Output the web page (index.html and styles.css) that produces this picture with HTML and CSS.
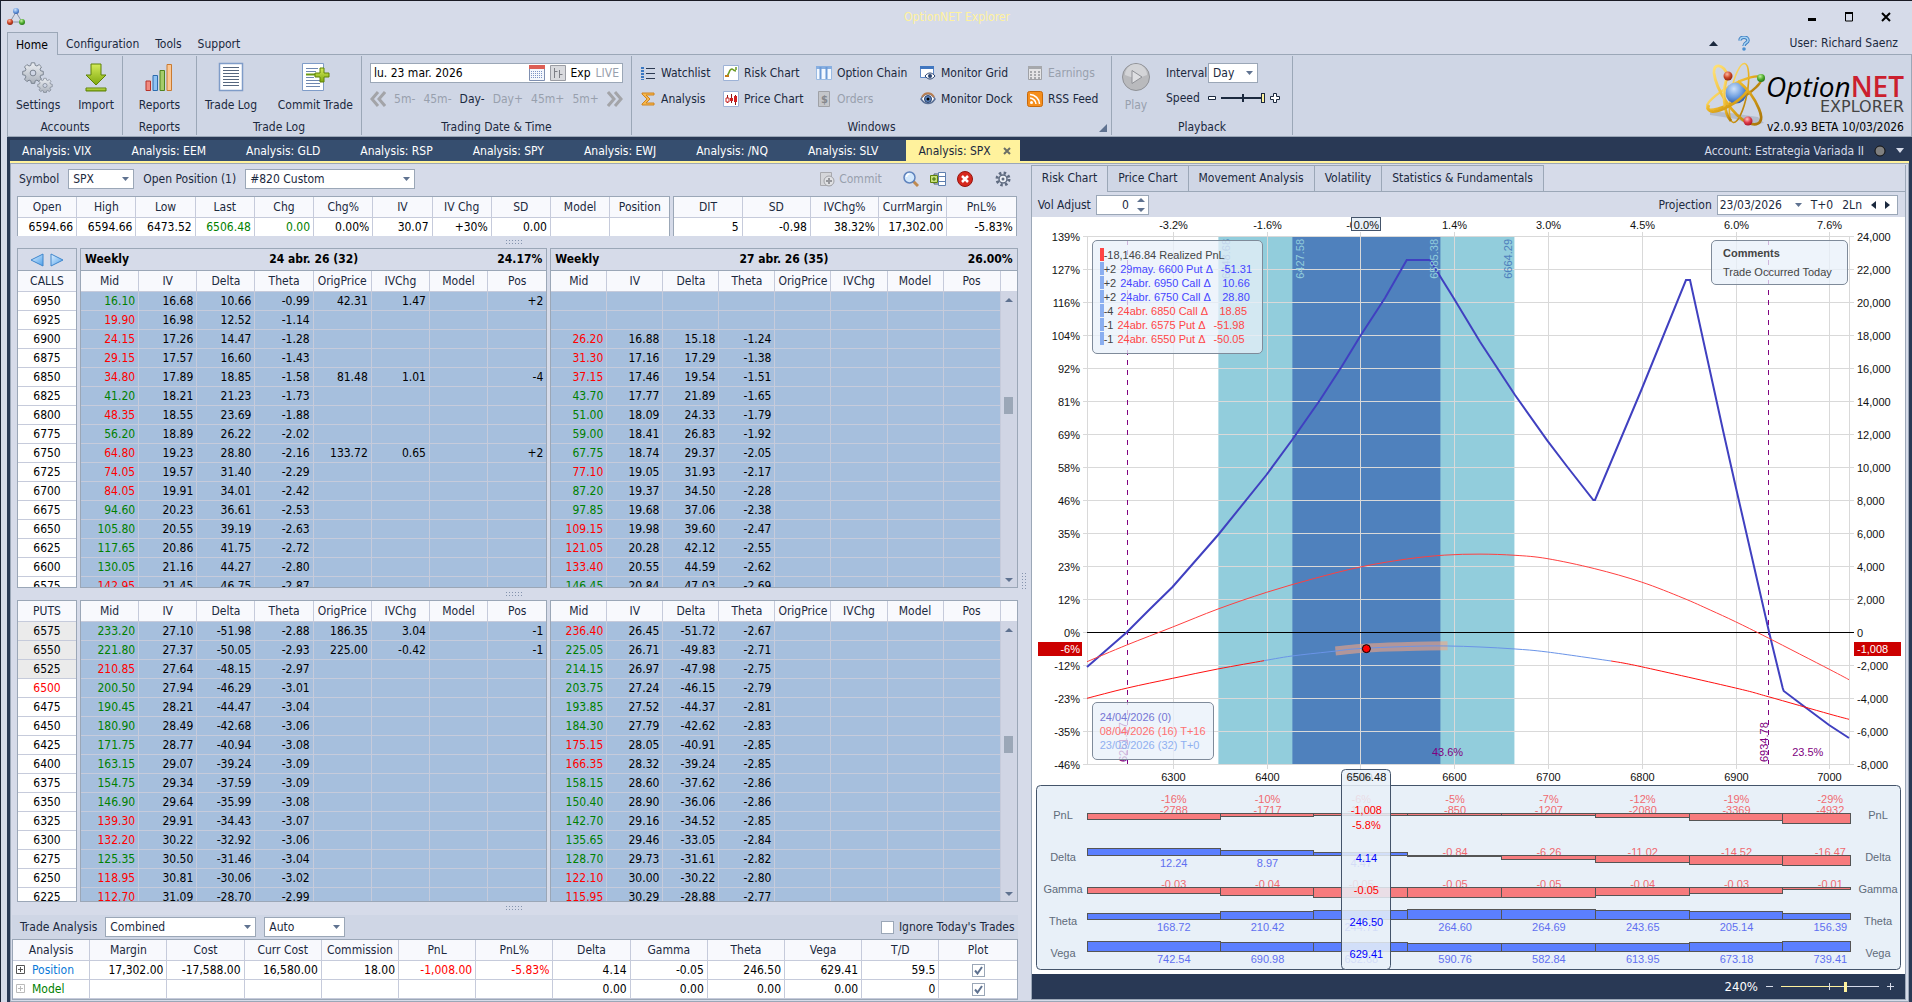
FILE: index.html
```html
<!DOCTYPE html>
<html lang="en">
<head>
    <meta charset="UTF-8">
    <meta name="viewport" content="width=device-width, initial-scale=1.0">
    <title>OptionNET Explorer</title>
    <link rel="stylesheet" href="styles.css">
</head>
<body>
    <svg class="defs" width="0" height="0" aria-hidden="true">
        <defs>
            <linearGradient id="gold" x1="0" y1="0" x2="1" y2="1"><stop offset="0" stop-color="#ffe27a"/><stop offset="0.5" stop-color="#e8b020"/><stop offset="1" stop-color="#a87408"/></linearGradient>
            <radialGradient id="ballBlue" cx="0.4" cy="0.3" r="0.8"><stop offset="0" stop-color="#cfe2fb"/><stop offset="0.5" stop-color="#6f9fe0"/><stop offset="1" stop-color="#1f4a9c"/></radialGradient>
            <radialGradient id="ballRed" cx="0.4" cy="0.3" r="0.8"><stop offset="0" stop-color="#ffb8a0"/><stop offset="0.5" stop-color="#cc4526"/><stop offset="1" stop-color="#7c1a0a"/></radialGradient>
            <radialGradient id="ballPink" cx="0.4" cy="0.3" r="0.8"><stop offset="0" stop-color="#ffc4c8"/><stop offset="0.5" stop-color="#dc3846"/><stop offset="1" stop-color="#9c0f20"/></radialGradient>
            <radialGradient id="ballGreen" cx="0.4" cy="0.3" r="0.8"><stop offset="0" stop-color="#c4f0a0"/><stop offset="0.5" stop-color="#4fae30"/><stop offset="1" stop-color="#1d6410"/></radialGradient>
            <linearGradient id="leaf" x1="0" y1="0" x2="0" y2="1"><stop offset="0" stop-color="#d5ec5a"/><stop offset="1" stop-color="#7fa80e"/></linearGradient>
            <linearGradient id="steel" x1="0" y1="0" x2="0" y2="1"><stop offset="0" stop-color="#eceff3"/><stop offset="1" stop-color="#a9b0ba"/></linearGradient>
            <linearGradient id="sky" x1="0" y1="0" x2="1" y2="1"><stop offset="0" stop-color="#e2f1ff"/><stop offset="1" stop-color="#4da0ea"/></linearGradient>
            <g id="gear">
                <g fill="url(#steel)" stroke="#6d7683">
                    <path d="M-2-10h4l.6 3 2 .8 2.6-1.7 2.8 2.8-1.7 2.6.8 2 3 .6v4l-3 .6-.8 2 1.7 2.6-2.8 2.8-2.6-1.7-2 .8-.6 3h-4l-.6-3-2-.8-2.6 1.7-2.8-2.8 1.7-2.6-.8-2-3-.6v-4l3-.6.8-2-1.7-2.6 2.8-2.8 2.6 1.7 2-.8z" transform="translate(0 -2)"/>
                    <circle r="3.4" fill="#cfd6e5"/>
                </g>
            </g>
        </defs>
    </svg>

    <header class="titlebar">
        <svg class="app-icon" width="18" height="18" viewBox="0 0 18 18">
            <path d="M9 4L3 14h12z" fill="none" stroke="#8a94a6"/>
            <circle cx="9" cy="3" r="3" fill="url(#ballBlue)"/><circle cx="3" cy="14" r="3" fill="url(#ballRed)"/><circle cx="15" cy="14" r="3" fill="url(#ballGreen)"/>
        </svg>
        <h1>OptionNET Explorer</h1>
        <div class="window-buttons">
            <button aria-label="Minimize"><svg width="10" height="10"><path d="M1 6h8v3H1z"/></svg></button>
            <button aria-label="Maximize"><svg width="10" height="10"><path d="M1.5 1h7v8h-7z" fill="none" stroke="#000"/><path d="M1 0h8v2H1z"/></svg></button>
            <button aria-label="Close"><svg width="10" height="10"><path d="M1 1l8 8M9 1L1 9" stroke="#000" stroke-width="2"/></svg></button>
        </div>
    </header>

    <nav class="menu">
        <a href="#" class="active">Home</a>
        <a href="#">Configuration</a>
        <a href="#">Tools</a>
        <a href="#">Support</a>
        <div class="menu-right">
            <button aria-label="Collapse ribbon"><svg width="9" height="5"><path d="M0 5h9L4.5 0z" fill="#1b293e"/></svg></button>
            <button aria-label="Help"><svg width="12" height="15" viewBox="0 0 12 15"><path d="M2 4.500C2 0 10 0 10 4.500 10 7 6 6.500 6 10" fill="none" stroke="#3f7fc0" stroke-width="3.500"/><path d="M2 4.500C2 0 10 0 10 4.500 10 7 6 6.500 6 10" fill="none" stroke="#a8d4f5" stroke-width="1.500"/><circle cx="6" cy="13" r="1.800" fill="#4b8fd0"/></svg></button>
            <span>User: Richard Saenz</span>
        </div>
    </nav>

    <section class="ribbon">
        <div class="group accounts">
            <div class="group-body">
                <button class="big">
                    <svg width="32" height="32" viewBox="0 0 32 32"><use href="#gear" transform="translate(11 12) scale(.85)"/><use href="#gear" transform="translate(23 24.500) scale(.6)"/></svg>
                    Settings
                </button>
                <button class="big">
                    <svg width="32" height="32" viewBox="0 0 32 32"><path d="M11 3h10v11h5L16 24 6 14h5z" fill="url(#leaf)" stroke="#5f8208"/><path d="M6 27h20v3H6z" fill="url(#leaf)" stroke="#5f8208"/></svg>
                    Import
                </button>
            </div>
            <span class="group-label">Accounts</span>
        </div>
        <div class="group reports">
            <div class="group-body">
                <button class="big">
                    <svg width="32" height="32" viewBox="0 0 32 32"><path d="M3 20h4.500v9.500H3z" fill="#f08a80" stroke="#b83228"/><path d="M10 14.500h4.500v15H10z" fill="#8fc2f2" stroke="#2c6cae"/><path d="M17 9.500h4.500v20H17z" fill="#a5cc6a" stroke="#4f8420"/><path d="M24 3.500h4.500v26H24z" fill="#fbc794" stroke="#c97a30"/></svg>
                    Reports
                </button>
            </div>
            <span class="group-label">Reports</span>
        </div>
        <div class="group tradelog">
            <div class="group-body">
                <button class="big">
                    <svg width="32" height="32" viewBox="0 0 32 32"><path d="M4.500 2.500h23v27h-23z" fill="#fff" stroke="#7f9cc8" stroke-width="1.500"/><path d="M8 6.500h16M8 9.500h16M8 12.500h16M8 15.500h16M8 18.500h16M8 21.500h16M8 24.500h16" stroke="#56677f"/></svg>
                    Trade Log
                </button>
                <button class="big">
                    <svg width="32" height="32" viewBox="0 0 32 32"><path d="M3.500 2.500h21v27h-21z" fill="#fff" stroke="#7f9cc8"/><path d="M7 7.500h12M7 10.500h10M7 16.500h8M7 19.500h14M7 22.500h14M7 25.500h14" stroke="#6f88b0"/><path d="M7 13.500h10" stroke="#6b9a10" stroke-width="2"/><path d="M21 7h4v5h5v4h-5v5h-4v-5h-5v-4h5z" fill="url(#leaf)" stroke="#5f8208"/></svg>
                    Commit Trade
                </button>
            </div>
            <span class="group-label">Trade Log</span>
        </div>
        <div class="group datetime">
            <div class="group-body stacked">
                <div class="date-box">
                    <input type="text" aria-label="Trading date" value="lu. 23 mar. 2026">
                    <button aria-label="Calendar"><svg width="16" height="16"><path d="M.5.5h15v15H.5z" fill="#f4f7fc" stroke="#7f8fb0"/><path d="M0 0h16v4H0z" fill="#dd5f55"/><path d="M2 6.500h12M2 8.500h12M2 10.500h12M2 12.500h12" stroke="#7c93c4" stroke-dasharray="1 1"/></svg></button>
                    <button aria-label="Expirations"><svg width="16" height="16"><path d="M.5.5h15v15H.5z" fill="#d9dade" stroke="#9a9ca3"/><path d="M4.500 3v10M4.500 6.500h3M9.500 5v8M9.500 9.500h3" stroke="#7d7f86" fill="none"/></svg></button>
                    <button>Exp</button>
                    <button disabled>LIVE</button>
                </div>
                <div class="steps">
                    <button disabled aria-label="Back"><svg width="16" height="16"><path d="M8 1L2 8l6 7M15 1L9 8l6 7" fill="none" stroke="#a3a4a8" stroke-width="3"/></svg></button>
                    <button disabled>5m-</button>
                    <button disabled>45m-</button>
                    <button>Day-</button>
                    <button disabled>Day+</button>
                    <button disabled>45m+</button>
                    <button disabled>5m+</button>
                    <button disabled aria-label="Forward"><svg width="16" height="16"><path d="M1 1l6 7-6 7M8 1l6 7-6 7" fill="none" stroke="#a3a4a8" stroke-width="3"/></svg></button>
                </div>
            </div>
            <span class="group-label">Trading Date &amp; Time</span>
        </div>
        <div class="group windows">
            <div class="group-body links">
                <button><svg width="16" height="16"><path d="M6 3.500h9M6 8.500h9M6 13.500h9" stroke="#2c3a52"/><path d="M2.500 2v13" stroke="#3b78c2" stroke-width="3" stroke-dasharray="2 1"/></svg>Watchlist</button>
                <button><svg width="16" height="16"><path d="M.5.5h15v15H.5z" fill="#fff" stroke="#9db2d6"/><path d="M2 11c5 1 3-7 7-7 1 0 1 2 4 2M13 2v3" fill="none" stroke="#6a9a20" stroke-width="1.500"/><path d="M2 11h4" stroke="#c77b18" stroke-width="2"/></svg>Risk Chart</button>
                <button><svg width="16" height="16"><path d="M.5 1.500h15v13H.5z" fill="#f3f8ff" stroke="#9bbbe2"/><path d="M0 1h16v3H0z" fill="#87aee0"/><path d="M4.500 2v12M10.500 2v12" stroke="#6c9ad6" stroke-width="2"/></svg>Option Chain</button>
                <button><svg width="16" height="16"><path d="M.5 1.500h13v11H.5z" fill="#fff" stroke="#5d87c4"/><path d="M0 1h14v3H0z" fill="#4177c0"/><path d="M5 11c3-4 7-4 10 0-3 4-7 4-10 0z" fill="#fff" stroke="#26406e"/><circle cx="10" cy="11" r="2" fill="#26406e"/></svg>Monitor Grid</button>
                <button disabled><svg width="16" height="16"><path d="M1.500 1.500h13v13h-13z" fill="#e4e4e6" stroke="#9fa1a6"/><path d="M1 1h14v3H1z" fill="#a6a8ac"/><path d="M3 7h10M3 10h10M3 13h10" stroke="#a6a8ac" stroke-width="2" stroke-dasharray="2 2"/></svg>Earnings</button>
                <button><svg width="16" height="16"><path d="M2 2h12v2H6l4 4-4 4h8v2H2v-1l5-5-5-5z" fill="#f7b74a" stroke="#cf8420"/></svg>Analysis</button>
                <button><svg width="16" height="16"><path d="M.5.5h15v15H.5z" fill="#fff" stroke="#9db2d6"/><path d="M4.500 4v8M8.500 3v9M12.500 4v10" stroke="#8f1717"/><path d="M3 7h3v4H3z" fill="#fff" stroke="#c22"/><path d="M7 7h3v3H7zM11 5h3v6h-3z" fill="#d11f1f"/></svg>Price Chart</button>
                <button disabled><svg width="16" height="16"><path d="M2.500.5h11v15h-11z" fill="#c4c6ca" stroke="#9fa1a6"/><text x="5" y="12" class="dollar">$</text></svg>Orders</button>
                <button><svg width="16" height="16"><path d="M1 8c4-7 10-7 14 0-4 6-10 6-14 0z" fill="#fff" stroke="#5a6f94" stroke-width="1.500"/><path d="M2 6C5 1 11 1 14 6" fill="none" stroke="#b87f52" stroke-width="2"/><circle cx="8" cy="8" r="3.500" fill="#5f86bd" stroke="#26406e"/><circle cx="8" cy="8" r="1.500"/></svg>Monitor Dock</button>
                <button><svg width="16" height="16"><rect x=".5" y=".5" width="15" height="15" rx="2" fill="#f58e1c" stroke="#c8690a"/><circle cx="4.500" cy="11.500" r="1.500" fill="#fff"/><path d="M3 7c3 0 6 3 6 6M3 3.500c5 0 9.500 4.500 9.500 9.500" fill="none" stroke="#fff" stroke-width="1.500"/></svg>RSS Feed</button>
            </div>
            <span class="group-label">Windows</span>
            <svg class="launcher" width="8" height="8"><path d="M8 0v8H0z" fill="#5f7290"/></svg>
        </div>
        <div class="group playback">
            <div class="group-body">
                <button class="big" disabled>
                    <svg width="32" height="32" viewBox="0 0 32 32"><circle cx="16" cy="16" r="13.500" fill="#b9babd" stroke="#8f9196"/><path d="M5 14a11 11 0 0 1 22 0q-11 5-22 0z" fill="#d3d4d7"/><path d="M12 9.500l10 6.500-10 6.500z" fill="#dedfe2" stroke="#8f9196"/></svg>
                    Play
                </button>
                <div class="play-options">
                    <label for="interval">Interval</label>
                    <select id="interval"><option>Day</option></select>
                    <label for="speed">Speed</label>
                    <div class="speed">
                        <svg width="8" height="4"><path d="M.5.5h7v3h-7z" fill="#fff" stroke="#1b293e"/></svg>
                        <input type="range" id="speed" value="100">
                        <svg width="10" height="10"><path d="M3.500.5h3v3h3v3h-3v3h-3v-3h-3v-3h3z" fill="#fff" stroke="#1b293e"/></svg>
                    </div>
                </div>
            </div>
            <span class="group-label">Playback</span>
        </div>
        <div class="brand">
            <svg width="60" height="68" viewBox="0 0 60 68">
                <path d="M4 50l20 2 28 4 6 6-14 2-14-6-26-4z" fill="#8f97a5" opacity=".4"/>
                <g fill="none" stroke="url(#gold)" stroke-width="2.400">
                    <ellipse cx="33" cy="32" rx="8" ry="30" transform="rotate(11 33 32)" stroke-width="1.600"/>
                    <ellipse cx="28" cy="32" rx="31" ry="8" transform="rotate(-29 28 32)"/>
                </g>
                <circle cx="30" cy="32" r="10.500" fill="url(#ballBlue)"/>
                <g fill="none" stroke="url(#gold)" stroke-width="2.800">
                    <path d="M22 15C17 2 7 2 8 12c2 16 18 42 34 50 12 4 16-2 11-14C49 38 42 28 32 20"/>
                    <path d="M22 15c-7 14-4 38 3 45"/>
                    <path d="M3 44c-4 8 6 9 20 1 8-4 15-10 19-16"/>
                </g>
                <circle cx="22" cy="15" r="4.500" fill="url(#ballRed)"/><circle cx="55" cy="17" r="4" fill="url(#ballGreen)"/><circle cx="42" cy="60" r="4.500" fill="url(#ballPink)"/>
            </svg>
            <div class="brand-text">
                <span class="brand-name"><i>Option</i><b>NET</b></span>
                <span class="brand-sub">EXPLORER</span>
                <span class="brand-version">v2.0.93 BETA 10/03/2026</span>
            </div>
        </div>
    </section>

    <main class="workspace">
        <nav class="doc-tabs">
            <a href="#">Analysis: VIX</a>
            <a href="#">Analysis: EEM</a>
            <a href="#">Analysis: GLD</a>
            <a href="#">Analysis: RSP</a>
            <a href="#">Analysis: SPY</a>
            <a href="#">Analysis: EWJ</a>
            <a href="#">Analysis: /NQ</a>
            <a href="#">Analysis: SLV</a>
            <a href="#" class="active">Analysis: SPX <svg width="8" height="8"><path d="M1 1l6 6M7 1L1 7" stroke="#6b6f66" stroke-width="2"/></svg></a>
            <div class="account">
                <span>Account: Estrategia Variada II</span>
                <svg width="12" height="12"><circle cx="6" cy="6" r="5" fill="#808080" stroke="#111"/></svg>
                <svg width="8" height="5"><path d="M0 0h8L4 5z" fill="#d6dbe9"/></svg>
            </div>
        </nav>

        <div class="frame">
            <section class="left">
                <div class="toolbar">
                    <label for="symbol">Symbol</label>
                    <select id="symbol"><option>SPX</option></select>
                    <label for="position">Open Position (1)</label>
                    <select id="position"><option>#820 Custom</option></select>
                    <div class="tools">
                        <button disabled class="commit"><svg width="16" height="16"><path d="M1.500 1.500h11v13h-11z" fill="#d5d6da" stroke="#a8a9ae"/><circle cx="10" cy="10" r="5" fill="#e0e1e4" stroke="#a0a1a6"/><path d="M10 7v6M7 10h6" stroke="#96979c" stroke-width="2"/></svg>Commit</button>
                        <button aria-label="Search"><svg width="16" height="16"><path d="M10 10l5 5" stroke="#c08a50" stroke-width="3"/><circle cx="6.500" cy="6.500" r="5.500" fill="#d3e8fc" stroke="#5f83bd" stroke-width="1.500"/><path d="M3.500 6a3 3 0 0 1 3-3" fill="none" stroke="#fff" stroke-width="1.500"/></svg></button>
                        <button aria-label="Columns"><svg width="16" height="16"><path d="M8.500 1.500h7v13h-7zM8.500 5.500h7M8.500 10.500h7" fill="#fff" stroke="#5f7fae"/><path d="M8 3H4v10h4" fill="none" stroke="#4a5a70"/><path d="M.5 4.500h7v7h-7z" fill="#c8e07a" stroke="#5f8208"/><path d="M4 6v4M2 8h4" stroke="#3f6a08"/></svg></button>
                        <button aria-label="Close position"><svg width="16" height="16"><circle cx="8" cy="8" r="7.500" fill="#d6281e" stroke="#96140e"/><path d="M5 5l6 6M11 5l-6 6" stroke="#fff" stroke-width="2.500"/></svg></button>
                        <button aria-label="Options" class="options"><svg width="16" height="16" viewBox="0 0 16 16"><circle cx="8" cy="8" r="6" fill="none" stroke="#5f6b80" stroke-width="3" stroke-dasharray="2.400 2.300"/><circle cx="8" cy="8" r="4" fill="#eef1f6" stroke="#5f6b80" stroke-width="1.500"/><circle cx="8" cy="8" r="1.500" fill="#5f6b80"/></svg></button>
                    </div>
                </div>

                <div class="quotes">
                    <table>
                        <tr><th>Open</th><th>High</th><th>Low</th><th>Last</th><th>Chg</th><th>Chg%</th><th>IV</th><th>IV Chg</th><th>SD</th><th>Model</th><th>Position</th></tr>
                        <tr><td>6594.66</td><td>6594.66</td><td>6473.52</td><td class="up">6506.48</td><td class="up">0.00</td><td>0.00%</td><td>30.07</td><td>+30%</td><td>0.00</td><td></td><td></td></tr>
                    </table>
                    <table>
                        <tr><th>DIT</th><th>SD</th><th>IVChg%</th><th>CurrMargin</th><th>PnL%</th></tr>
                        <tr><td>5</td><td>-0.98</td><td>38.32%</td><td>17,302.00</td><td>-5.83%</td></tr>
                    </table>
                </div>
                <div class="grip"></div>

                <div class="chain calls">
                    <div class="panel">
                        <div class="expiry nav">
                            <button aria-label="Previous expiry"><svg width="14" height="14"><path d="M13 1v12L1 7z" fill="url(#sky)" stroke="#3f86cc"/></svg></button>
                            <button aria-label="Next expiry"><svg width="14" height="14"><path d="M1 1v12l12-6z" fill="url(#sky)" stroke="#3f86cc"/></svg></button>
                        </div>
                        <table class="strikes" id="call-strikes"><tr><th>CALLS</th></tr></table>
                    </div>
                    <div class="panel">
                        <div class="expiry"><span>Weekly</span><span>24 abr. 26 (32)</span><span>24.17%</span></div>
                        <table class="options-table" id="calls-front"></table>
                    </div>
                    <div class="panel">
                        <div class="expiry"><span>Weekly</span><span>27 abr. 26 (35)</span><span>26.00%</span></div>
                        <div class="scroll-area">
                            <table class="options-table" id="calls-back"></table>
                            <div class="scrollbar"><i class="arrow-up"></i><i class="thumb calls-thumb"></i><i class="arrow-down"></i></div>
                        </div>
                    </div>
                </div>
                <div class="grip"></div>

                <div class="chain puts">
                    <div class="panel">
                        <table class="strikes" id="put-strikes"><tr><th>PUTS</th></tr></table>
                    </div>
                    <div class="panel">
                        <table class="options-table" id="puts-front"></table>
                    </div>
                    <div class="panel">
                        <div class="scroll-area">
                            <table class="options-table" id="puts-back"></table>
                            <div class="scrollbar"><i class="arrow-up"></i><i class="thumb puts-thumb"></i><i class="arrow-down"></i></div>
                        </div>
                    </div>
                </div>
                <div class="grip"></div>

                <div class="trade-bar">
                    <label for="analysis-mode">Trade Analysis</label>
                    <select id="analysis-mode"><option>Combined</option></select>
                    <select id="analysis-auto" aria-label="Update mode"><option>Auto</option></select>
                    <label class="ignore"><input type="checkbox"> Ignore Today's Trades</label>
                </div>
                <table class="trade-table">
                    <tr><th>Analysis</th><th>Margin</th><th>Cost</th><th>Curr Cost</th><th>Commission</th><th>PnL</th><th>PnL%</th><th>Delta</th><th>Gamma</th><th>Theta</th><th>Vega</th><th>T/D</th><th>Plot</th></tr>
                    <tr>
                        <td class="name position"><svg width="9" height="9"><path d="M.5.5h8v8h-8zM2 4.500h5M4.500 2v5" fill="none" stroke="#555"/></svg>Position</td>
                        <td>17,302.00</td><td>-17,588.00</td><td>16,580.00</td><td>18.00</td><td class="down">-1,008.00</td><td class="down">-5.83%</td><td>4.14</td><td>-0.05</td><td>246.50</td><td>629.41</td><td>59.5</td>
                        <td class="plot"><input type="checkbox" checked aria-label="Plot position"></td>
                    </tr>
                    <tr>
                        <td class="name model"><svg width="9" height="9"><path d="M.5.5h8v8h-8zM2 4.500h5M4.500 2v5" fill="none" stroke="#bbb"/></svg>Model</td>
                        <td></td><td></td><td></td><td></td><td></td><td></td><td>0.00</td><td>0.00</td><td>0.00</td><td>0.00</td><td>0</td>
                        <td class="plot"><input type="checkbox" checked aria-label="Plot model"></td>
                    </tr>
                </table>
            </section>

            <div class="splitter"></div>

            <section class="right">
                <nav class="chart-tabs">
                    <a href="#" class="active">Risk Chart</a>
                    <a href="#">Price Chart</a>
                    <a href="#">Movement Analysis</a>
                    <a href="#">Volatility</a>
                    <a href="#">Statistics &amp; Fundamentals</a>
                </nav>
                <div class="chart-toolbar">
                    <label for="vol">Vol Adjust</label>
                    <div class="spin">
                        <input type="text" id="vol" value="0">
                        <svg width="8" height="14"><path d="M0 4h8L4 0zM0 10h8l-4 4z" fill="#5f7290"/></svg>
                    </div>
                    <label for="projection" class="projection-label">Projection</label>
                    <div class="projection">
                        <input type="text" id="projection" value="23/03/2026">
                        <button aria-label="Choose date"><svg width="7" height="4"><path d="M0 0h7L3.500 4z" fill="#5f7290"/></svg></button>
                        <button>T+0</button>
                        <button>2Ln</button>
                        <button aria-label="Previous day"><svg width="5" height="8"><path d="M5 0v8L0 4z" fill="#1b293e"/></svg></button>
                        <button aria-label="Next day"><svg width="5" height="8"><path d="M0 0v8l5-4z" fill="#1b293e"/></svg></button>
                    </div>
                </div>
                <div class="chart">
                    <svg id="risk-chart"></svg>
                    <ul class="callout legs">
                        <li class="realized">-18,146.84 Realized PnL</li>
                        <li>+2 <em class="long">29may. 6600 Put Δ<b>-51.31</b></em></li>
                        <li>+2 <em class="long">24abr. 6950 Call Δ<b>10.66</b></em></li>
                        <li>+2 <em class="long">24abr. 6750 Call Δ<b>28.80</b></em></li>
                        <li>-4 <em class="short">24abr. 6850 Call Δ<b>18.85</b></em></li>
                        <li>-1 <em class="short">24abr. 6575 Put Δ<b>-51.98</b></em></li>
                        <li>-1 <em class="short">24abr. 6550 Put Δ<b>-50.05</b></em></li>
                    </ul>
                    <div class="callout comments">
                        <h2>Comments</h2>
                        <p>Trade Occurred Today</p>
                    </div>
                    <ul class="callout dates">
                        <li class="expiration">24/04/2026 (0)</li>
                        <li class="halfway">08/04/2026 (16) T+16</li>
                        <li class="today">23/03/2026 (32) T+0</li>
                    </ul>
                </div>
                <footer class="status">
                    <label for="zoom">240%</label>
                    <svg width="7" height="9"><path d="M0 4.500h7" stroke="#d6dbe9"/></svg>
                    <input type="range" id="zoom" value="66">
                    <svg width="7" height="9"><path d="M0 4.500h7M3.500 1v7" stroke="#d6dbe9"/></svg>
                </footer>
            </section>
        </div>
    </main>

    <script src="app.js"></script>
</body>
</html>
```

FILE: styles.css
```css
* {
    box-sizing: border-box;
}
body {
    margin: 0;
    height: 100vh;
    display: flex;
    flex-direction: column;
    overflow: hidden;
    font-family: Tahoma, "DejaVu Sans Condensed", "DejaVu Sans", sans-serif;
    font-size: 12px;
    line-height: 16px;
    color: #1b293e;
    background: #d6dbe9;
    border-top: 1px solid #1a1a24;
    border-left: 1px solid #1a2436;
}
a {
    color: inherit;
    text-decoration: none;
}
button, input, select {
    font: inherit;
    color: inherit;
}
button {
    background: none;
    border: 0;
    padding: 0;
    white-space: nowrap;
}
button:disabled {
    color: #98a0ad;
}
svg {
    display: block;
    flex: none;
}
.defs {
    position: absolute;
}
select {
    appearance: none;
    height: 20px;
    padding: 0 14px 0 4px;
    border: 1px solid #9ba7b7;
    border-radius: 0;
    background: #fff url("data:image/svg+xml,%3Csvg xmlns='http://www.w3.org/2000/svg' width='7' height='4'%3E%3Cpath d='M0 0h7L3.5 4z' fill='%235f7290'/%3E%3C/svg%3E") no-repeat right 4px center;
}
input[type="checkbox"] {
    appearance: none;
    width: 13px;
    height: 13px;
    margin: 0;
    border: 1px solid #9ba7b7;
    background: #fff;
}
input[type="checkbox"]:checked {
    background: #fff url("data:image/svg+xml,%3Csvg xmlns='http://www.w3.org/2000/svg' width='9' height='9'%3E%3Cpath d='M1 4.5l2.5 3L8 1' fill='none' stroke='%235f7290' stroke-width='2'/%3E%3C/svg%3E") no-repeat center;
}

/* Title bar and menu */
.titlebar {
    height: 31px;
    display: grid;
    grid-template-columns: 1fr auto 1fr;
    align-items: center;
    padding: 0 21px 0 6px;
}
.titlebar h1 {
    margin: 0 0 0 16px;
    font-size: 12px;
    font-weight: normal;
    color: #fff29d;
}
.window-buttons {
    display: flex;
    justify-content: flex-end;
    gap: 27px;
}
.menu {
    height: 22px;
    display: flex;
    align-items: stretch;
    padding-left: 6px;
    line-height: 25px;
}
.menu a {
    padding: 0 8px;
}
.menu a.active {
    width: 51px;
    padding: 0 8px;
    height: 23px;
    position: relative;
    z-index: 1;
    color: #000;
    background: #cfd6e5;
    border: 1px solid #9ba7b7;
    border-bottom: 0;
}
.menu-right {
    margin-left: auto;
    display: flex;
    align-items: center;
    gap: 20px;
    padding-right: 14px;
}
.menu-right span {
    margin-left: 20px;
}

/* Ribbon */
.ribbon {
    height: 83px;
    margin-left: 6px;
    display: flex;
    background: #cfd6e5;
    border: 1px solid #9ba7b7;
}
.group {
    position: relative;
    display: flex;
    flex-direction: column;
    justify-content: space-between;
    flex: none;
    margin: 1px 0;
    padding: 5px 8px 0;
    border-right: 1px solid #9ba7b7;
}
.accounts { width: 115px; }
.reports { width: 74px; }
.tradelog { width: 165px; }
.datetime { width: 270px; }
.windows { width: 480px; }
.playback { width: 181px; }
.group-body {
    display: flex;
    justify-content: space-between;
}
.reports .group-body {
    justify-content: center;
}
.group-label {
    text-align: center;
}
.big {
    display: flex;
    flex-direction: column;
    align-items: center;
    gap: 4px;
}
.group-body.stacked {
    flex-direction: column;
    gap: 8px;
    padding-top: 2px;
}
.date-box {
    display: flex;
    align-items: center;
    gap: 5px;
    height: 20px;
    padding: 0 3px;
    background: #fff;
    border: 1px solid #9ba7b7;
    color: #000;
}
.date-box input {
    flex: 1;
    min-width: 0;
    border: 0;
    padding: 0;
    background: none;
}
.steps {
    display: flex;
    align-items: center;
    justify-content: space-between;
}
.group-body.links {
    display: grid;
    grid-template-columns: 83px 93px 104px 107px 80px;
    justify-content: start;
    row-gap: 10px;
    padding-top: 4px;
}
.links button {
    display: flex;
    align-items: center;
    gap: 5px;
    height: 16px;
}
.dollar {
    font-size: 11px;
    font-weight: bold;
    fill: #85878c;
}
.launcher {
    position: absolute;
    right: 4px;
    bottom: 3px;
}
.playback .group-body {
    justify-content: flex-start;
    gap: 14px;
}
.play-options {
    display: grid;
    grid-template-columns: 40px 72px;
    column-gap: 2px;
    row-gap: 7px;
    align-content: start;
    align-items: center;
    padding-top: 2px;
}
.play-options select {
    width: 50px;
}
.speed {
    display: flex;
    align-items: center;
    gap: 5px;
}
input[type="range"] {
    appearance: none;
    margin: 0;
    height: 12px;
}
.speed input {
    width: 44px;
    background: linear-gradient(#1b293e, #1b293e) center / 2px 8px no-repeat, linear-gradient(#1b293e, #1b293e) center / 100% 2px no-repeat;
}
.speed input::-webkit-slider-thumb {
    appearance: none;
    width: 4px;
    height: 10px;
    background: #fff29d;
    border: 1px solid #1b293e;
}
.brand {
    margin-left: auto;
    padding: 6px 7px 0 0;
    display: flex;
}
.brand-text {
    display: flex;
    flex-direction: column;
    align-items: flex-end;
    padding-top: 10px;
    color: #000;
}
.brand-name {
    font: 28px/30px "Open Sans", sans-serif;
}
.brand-name b {
    font-weight: 600;
    color: #cb1f2e;
}
.brand-sub {
    font: 16px/11px "DejaVu Sans", sans-serif;
    color: #444;
}
.brand-version {
    margin-top: 7px;
}

/* Document tabs */
.workspace {
    flex: 1;
    min-height: 0;
    display: flex;
    flex-direction: column;
    margin-left: 6px;
    background: #293955;
    padding: 0 3px;
}
.doc-tabs {
    display: flex;
    height: 26px;
    padding-top: 3px;
    border-bottom: 2px solid #fff29d;
    line-height: 22px;
    color: #fff;
}
.doc-tabs a {
    padding: 0 28px 0 12px;
    background: #364e6f;
}
.doc-tabs a.active {
    display: flex;
    align-items: center;
    gap: 12px;
    padding-right: 9px;
    background: #fff29d;
    color: #1b293e;
}
.account {
    margin-left: auto;
    display: flex;
    align-items: center;
    gap: 10px;
    padding-right: 5px;
    color: #d6dbe9;
}
.frame {
    flex: 1;
    min-height: 0;
    display: grid;
    grid-template-columns: 1.15fr 13px 1fr;
    grid-template-rows: 100%;
    padding: 0 2px 1px 0;
    background: #d6dbe9;
    border: 1px solid #9ba7b7;
}

/* Left side */
.left {
    display: flex;
    flex-direction: column;
    min-width: 0;
}
.toolbar {
    display: flex;
    align-items: center;
    gap: 9px;
    height: 30px;
    margin-bottom: 2px;
    padding-left: 8px;
}
#symbol { width: 66px; }
#position { width: 170px; }
.tools {
    margin-left: auto;
    display: flex;
    align-items: center;
    gap: 11px;
    padding-right: 7px;
}
.tools button {
    display: flex;
    gap: 4px;
}
.tools .commit { margin-right: 10px; }
.tools .options { margin-left: 11px; }
table {
    width: 100%;
    table-layout: fixed;
    border-collapse: separate;
    border-spacing: 0;
    color: #000;
}
th, td {
    padding: 0 3px;
    height: 19px;
    border-right: 1px solid #c6cbdb;
    border-bottom: 1px solid #c6cbdb;
    text-align: right;
    white-space: nowrap;
    line-height: 16px;
}
th:last-child, td:last-child {
    border-right: 0;
}
th {
    height: 21px;
    padding: 0;
    font-weight: normal;
    text-align: center;
    color: #1b293e;
    background: #f8f9fd;
}
.up { color: #008000; }
.down { color: #f00; }
.quotes {
    display: grid;
    grid-template-columns: 653fr 343fr;
    gap: 3px;
    margin: 0 1px 0 6px;
}
.quotes table {
    border: 1px solid #9ba7b7;
    border-bottom: 0;
    background: #fff;
}
.quotes td {
    height: 18px;
    border-bottom: 0;
}
.grip {
    flex: none;
    height: 12px;
    background: repeating-linear-gradient(90deg, #8493ad 0 1px, transparent 1px 3px) center 4px / 16px 1px no-repeat,
        repeating-linear-gradient(90deg, #8493ad 0 1px, transparent 1px 3px) center 7px / 16px 1px no-repeat;
}
.chain {
    display: grid;
    grid-template-columns: 60px 1fr 1fr;
    grid-template-rows: 100%;
    gap: 3px;
    min-height: 0;
    margin-left: 6px;
}
.calls { flex: 340 1 0; }
.puts { flex: 302 1 0; }
.panel {
    overflow: hidden;
    border: 1px solid #9ba7b7;
    background: #a6bfdd;
}
.expiry {
    display: grid;
    grid-template-columns: 1fr auto 1fr;
    height: 22px;
    padding: 0 4px;
    font-weight: bold;
    line-height: 21px;
    color: #000;
    background: #d6dbe9;
    border-bottom: 1px solid #9ba7b7;
}
.expiry span:last-child {
    text-align: right;
}
.expiry.nav {
    display: flex;
    justify-content: center;
    align-items: center;
    gap: 6px;
}
.strikes td {
    text-align: center;
    background: #fff;
}
.strikes td.itm {
    background: #ebebeb;
}
.scroll-area {
    display: flex;
    height: 100%;
}
.calls .scroll-area {
    height: calc(100% - 22px);
}
.scroll-area table {
    flex: 1;
    align-self: flex-start;
}
.scrollbar {
    position: relative;
    flex: none;
    width: 17px;
    display: flex;
    flex-direction: column;
    justify-content: space-between;
    align-items: center;
    padding: 27px 0 5px;
    border-left: 1px solid #c6cbdb;
    background: linear-gradient(#f8f9fd 0 20px, #d0d5e4 20px);
}
.arrow-up, .arrow-down {
    border: 4px solid transparent;
    border-top: 0;
    border-bottom-color: #5f7290;
}
.arrow-down {
    border-top: 4px solid #5f7290;
    border-bottom: 0;
}
.thumb {
    position: absolute;
    width: 9px;
    height: 17px;
    background: #9ba7b7;
}
.calls-thumb { top: 40%; }
.puts-thumb { top: 45%; }
.trade-bar {
    display: flex;
    align-items: center;
    gap: 8px;
    height: 24px;
    margin: 1px 0 0 1px;
    padding: 0 3px 0 8px;
    background: #cfd6e5;
}
#analysis-mode { width: 151px; }
#analysis-auto { width: 81px; }
.ignore {
    margin-left: auto;
    display: flex;
    align-items: center;
    gap: 5px;
}
.trade-table {
    margin-left: 1px;
    width: calc(100% - 1px);
    border: 1px solid #9ba7b7;
    background: #fff;
}
.trade-table .name {
    text-align: left;
}
.name svg {
    display: inline-block;
    margin-right: 7px;
}
.position { color: #0a7ad8; }
.model { color: #008000; }
.trade-table .plot {
    text-align: center;
}
.plot input[type="checkbox"] {
    display: block;
    margin: 0 auto;
}
.splitter {
    background: repeating-linear-gradient(#8493ad 0 1px, transparent 1px 3px) 4px center / 1px 18px no-repeat,
        repeating-linear-gradient(#8493ad 0 1px, transparent 1px 3px) 7px center / 1px 18px no-repeat;
}

/* Right side */
.right {
    display: flex;
    flex-direction: column;
    min-width: 0;
    margin-top: 1px;
    border: 1px solid #9ba7b7;
    border-top: 0;
}
.chart-tabs {
    display: flex;
    height: 27px;
    line-height: 25px;
    border-bottom: 1px solid #9ba7b7;
}
.chart-tabs a {
    height: 27px;
    padding: 0 10px;
    background: #cfd6e5;
    border: 1px solid #9ba7b7;
    border-left: 0;
}
.chart-tabs a.active {
    background: #d6dbe9;
    border-bottom: 0;
}
.chart-toolbar {
    display: flex;
    align-items: center;
    gap: 5px;
    height: 25px;
    padding: 0 7px 0 6px;
}
.spin {
    display: flex;
    align-items: center;
    width: 53px;
    height: 20px;
    padding-right: 4px;
    background: #fff;
    border: 1px solid #9ba7b7;
}
.spin input {
    width: 32px;
    padding: 0;
    border: 0;
    text-align: right;
    background: none;
    margin-right: 8px;
}
.projection-label {
    margin-left: auto;
}
.projection {
    display: flex;
    align-items: center;
    gap: 9px;
    height: 20px;
    padding: 0 7px 0 2px;
    background: #fff;
    border: 1px solid #9ba7b7;
}
.projection input {
    width: 66px;
    padding: 0;
    border: 0;
}
.chart {
    position: relative;
    flex: 1;
    min-height: 0;
    overflow: hidden;
    background: #fff;
    font-family: "Liberation Sans", Arial, sans-serif;
    font-size: 11px;
}
#risk-chart {
    width: 100%;
    height: 100%;
}
#risk-chart text {
    fill: #111;
}
#risk-chart .grid { stroke: #d9d9d9; }
#risk-chart .mark { fill: #800080; }
#risk-chart .on-outer { fill: #4f81bd; }
#risk-chart .on-inner { fill: #92cddc; }
#risk-chart .tag { fill: #fff; }
#risk-chart .greek { fill: #5f6b7a; }
#risk-chart .neg { fill: #f06a70; }
#risk-chart .pos { fill: #5f6ff0; }
#risk-chart .now-neg { fill: #f00; }
#risk-chart .now-pos { fill: #00f; }
.callout {
    position: absolute;
    margin: 0;
    padding: 7px;
    list-style: none;
    line-height: 14px;
    color: #444;
    background: rgba(232, 240, 250, 0.75);
    border: 1px solid #7f8b9a;
    border-radius: 5px;
}
.legs {
    top: 23px;
    left: 60px;
    width: 171px;
}
.legs li {
    height: 13px;
    margin-bottom: 1px;
    border-left: 4px solid #8aaef0;
}
.legs .realized { border-color: #ff4545; }
.legs em {
    font-style: normal;
    margin-left: 1px;
}
.legs b {
    display: inline-block;
    width: 39px;
    font-weight: normal;
    text-align: right;
}
.long { color: #4646ff; }
.short { color: #ff4646; }
.comments {
    top: 23px;
    right: 57px;
    width: 137px;
    padding: 5px 11px;
    white-space: nowrap;
}
.comments h2, .comments p {
    margin: 0;
    font-size: 11px;
}
.comments h2 {
    margin-bottom: 5px;
}
.dates {
    bottom: 214px;
    left: 60px;
    width: 122px;
}
.expiration { color: #7676d4; }
.halfway { color: #ff7070; }
.today { color: #90b0f0; }
.status {
    display: flex;
    justify-content: flex-end;
    align-items: center;
    gap: 8px;
    height: 25px;
    padding-right: 11px;
    background: #293955;
    color: #fff;
    font-size: 13px;
}
.status input {
    width: 98px;
    background: linear-gradient(#d6dbe9, #d6dbe9) center / 1px 7px no-repeat, linear-gradient(90deg, #fff29d 62%, #d6dbe9 62%) center / 100% 1px no-repeat;
}
.status input::-webkit-slider-thumb {
    appearance: none;
    width: 3px;
    height: 10px;
    background: #fff29d;
}
```

FILE: app.js
```js
// Option chains: strike, then "mid IV delta theta origPrice IVChg model pos".
// The mid starts with "u" for an uptick and "d" for a downtick.
const calls = [
    [6950, 'u16.10 16.68 10.66 -0.99 42.31 1.47 . +2', ''],
    [6925, 'd19.90 16.98 12.52 -1.14', ''],
    [6900, 'd24.15 17.26 14.47 -1.28', 'd26.20 16.88 15.18 -1.24'],
    [6875, 'd29.15 17.57 16.60 -1.43', 'd31.30 17.16 17.29 -1.38'],
    [6850, 'd34.80 17.89 18.85 -1.58 81.48 1.01 . -4', 'd37.15 17.46 19.54 -1.51'],
    [6825, 'u41.20 18.21 21.23 -1.73', 'u43.70 17.77 21.89 -1.65'],
    [6800, 'd48.35 18.55 23.69 -1.88', 'u51.00 18.09 24.33 -1.79'],
    [6775, 'u56.20 18.89 26.22 -2.02', 'u59.00 18.41 26.83 -1.92'],
    [6750, 'd64.80 19.23 28.80 -2.16 133.72 0.65 . +2', 'u67.75 18.74 29.37 -2.05'],
    [6725, 'd74.05 19.57 31.40 -2.29', 'd77.10 19.05 31.93 -2.17'],
    [6700, 'd84.05 19.91 34.01 -2.42', 'u87.20 19.37 34.50 -2.28'],
    [6675, 'u94.60 20.23 36.61 -2.53', 'u97.85 19.68 37.06 -2.38'],
    [6650, 'u105.80 20.55 39.19 -2.63', 'd109.15 19.98 39.60 -2.47'],
    [6625, 'u117.65 20.86 41.75 -2.72', 'd121.05 20.28 42.12 -2.55'],
    [6600, 'u130.05 21.16 44.27 -2.80', 'd133.40 20.55 44.59 -2.62'],
    [6575, 'd142.95 21.45 46.75 -2.87', 'u146.45 20.84 47.03 -2.69']
];
const puts = [
    [6575, 'u233.20 27.10 -51.98 -2.88 186.35 3.04 . -1', 'd236.40 26.45 -51.72 -2.67'],
    [6550, 'u221.80 27.37 -50.05 -2.93 225.00 -0.42 . -1', 'u225.05 26.71 -49.83 -2.71'],
    [6525, 'd210.85 27.64 -48.15 -2.97', 'u214.15 26.97 -47.98 -2.75'],
    [6500, 'u200.50 27.94 -46.29 -3.01', 'u203.75 27.24 -46.15 -2.79'],
    [6475, 'u190.45 28.21 -44.47 -3.04', 'u193.85 27.52 -44.37 -2.81'],
    [6450, 'u180.90 28.49 -42.68 -3.06', 'u184.30 27.79 -42.62 -2.83'],
    [6425, 'u171.75 28.77 -40.94 -3.08', 'd175.15 28.05 -40.91 -2.85'],
    [6400, 'u163.15 29.07 -39.24 -3.09', 'd166.35 28.32 -39.24 -2.85'],
    [6375, 'u154.75 29.34 -37.59 -3.09', 'u158.15 28.60 -37.62 -2.86'],
    [6350, 'u146.90 29.64 -35.99 -3.08', 'u150.40 28.90 -36.06 -2.86'],
    [6325, 'd139.30 29.91 -34.43 -3.07', 'u142.70 29.16 -34.52 -2.85'],
    [6300, 'd132.20 30.22 -32.92 -3.06', 'u135.65 29.46 -33.05 -2.84'],
    [6275, 'u125.35 30.50 -31.46 -3.04', 'u128.70 29.73 -31.61 -2.82'],
    [6250, 'd118.95 30.81 -30.06 -3.02', 'd122.10 30.00 -30.22 -2.80'],
    [6225, 'd112.70 31.09 -28.70 -2.99', 'd115.95 30.29 -28.88 -2.77']
];
const columns = ['Mid', 'IV', 'Delta', 'Theta', 'OrigPrice', 'IVChg', 'Model', 'Pos'];

function chainRow(text) {
    const values = text.split(' ');
    return '<tr>' + columns.map((name, i) => {
        let value = values[i] || '';
        if (value === '.') value = '';
        if (i > 0 || !value) return `<td>${value}</td>`;
        return `<td class="${value[0] === 'u' ? 'up' : 'down'}">${value.slice(1)}</td>`;
    }).join('') + '</tr>';
}

function fillChain(rows, index, id) {
    const head = '<tr>' + columns.map(name => `<th>${name}</th>`).join('') + '</tr>';
    document.getElementById(id).innerHTML = head + rows.map(row => chainRow(row[index])).join('');
}

fillChain(calls, 1, 'calls-front');
fillChain(calls, 2, 'calls-back');
fillChain(puts, 1, 'puts-front');
fillChain(puts, 2, 'puts-back');
document.querySelector('#call-strikes tbody').innerHTML += calls.map(row => `<tr><td>${row[0]}</td></tr>`).join('');
document.querySelector('#put-strikes tbody').innerHTML += puts.map(row => {
    const cls = row[0] > 6506 ? 'itm' : row[0] === 6500 ? 'down' : '';
    return `<tr><td class="${cls}">${row[0]}</td></tr>`;
}).join('');

// Risk chart: curves are [price, pnl]
const expiration = [
    [6208.6, -2121], [6251.3, 0], [6274.7, 1333], [6300, 2745], [6348.3, 5879], [6399.8, 9515],
    [6427.2, 11636], [6457, 14060], [6480, 16079], [6500, 17939], [6526.3, 20242], [6549.5, 22545],
    [6574.3, 22545], [6586, 21473], [6598.8, 20303], [6627.6, 17594], [6664.9, 14364], [6699.4, 11594],
    [6720, 10061], [6748.4, 8000], [6750.2, 8000], [6799.6, 14667], [6847.2, 21333], [6851.5, 21333],
    [6887, 12139], [6899.8, 8909], [6930.4, 1333], [6936, -61], [6950.3, -3394], [6951.4, -3576],
    [6974, -4545], [6999.7, -5636], [7021, -6424]
];
const halfway = [
    [6208.6, -1800], [6251, -788], [6300, 303], [6348.3, 1394], [6399.8, 2400], [6450, 3230],
    [6500, 3939], [6549.5, 4424], [6590, 4660], [6627.6, 4720], [6665, 4648], [6699, 4450],
    [6750, 3836], [6799.6, 3030], [6844, 2061], [6873, 1333], [6900, 624], [6935, -364],
    [7000, -2260], [7021, -2891]
];
const todayLow = [[6208.6, -4018], [6251.6, -3394], [6300, -2806], [6348, -2242], [6397.3, -1739]];
const todayMid = [
    [6397.3, -1739], [6427, -1455], [6467.7, -1194], [6500, -1000], [6560, -860], [6593, -848],
    [6627.6, -909], [6665, -1030], [6699.4, -1212], [6767.5, -1758]
];
const todayHigh = [[6767.5, -1758], [6799.6, -2103], [6900, -3394], [6935, -3921], [7000, -4970], [7021, -5291]];
const range = [[6473.5, -1150], [6500, -1000], [6530, -910], [6560, -860], [6593, -830]];

const percentAxis = ['139%', '127%', '116%', '104%', '92%', '81%', '69%', '58%', '46%', '35%', '23%', '12%', '0%', '-12%', '-23%', '-35%', '-46%'];
const moveAxis = ['-3.2%', '-1.6%', '-0.0%', '1.4%', '3.0%', '4.5%', '6.0%', '7.6%'];

// Greeks under the chart, one value per 100 points; base is the distance from the bottom
const greeks = [
    { name: 'PnL', base: 160, values: [-2788, -1717, -1070, -850, -1207, -2080, -3369, -4932], now: '-1,008' },
    { name: 'Delta', base: 118, values: ['12.24', '8.97', '4.47', '-0.84', '-6.26', '-11.02', '-14.52', '-16.47'], now: '4.14' },
    { name: 'Gamma', base: 86, values: ['-0.03', '-0.04', '-0.05', '-0.05', '-0.05', '-0.04', '-0.03', '-0.01'], now: '-0.05' },
    { name: 'Theta', base: 54, values: ['168.72', '210.42', '244.71', '264.60', '264.69', '243.65', '205.14', '156.39'], now: '246.50' },
    { name: 'Vega', base: 22, values: ['742.54', '690.98', '632.68', '590.76', '582.84', '613.95', '673.18', '739.41'], now: '629.41' }
];
const pnlPercents = ['-16%', '-10%', '-6%', '-5%', '-7%', '-12%', '-19%', '-29%'];

function drawChart() {
    const svg = document.getElementById('risk-chart');
    const width = svg.clientWidth;
    const height = svg.clientHeight;
    const left = 55, right = width - 56, top = 19, bottom = height - 210;
    const minPrice = 6208.6, maxPrice = 7021;
    const x = price => left + (price - minPrice) / (maxPrice - minPrice) * (right - left);
    const y = pnl => top + (24000 - pnl) / 32000 * (bottom - top);
    const out = [];

    const line = (x1, y1, x2, y2, attrs) => out.push(`<line x1="${x1}" y1="${y1}" x2="${x2}" y2="${y2}" ${attrs}/>`);
    const rect = (x1, y1, w, h, attrs) => out.push(`<rect x="${x1}" y="${y1}" width="${w}" height="${h}" ${attrs}/>`);
    const text = (tx, ty, value, anchor, cls) => out.push(`<text x="${tx}" y="${ty + 4}" text-anchor="${anchor}" class="${cls || ''}">${value}</text>`);
    const vertical = (tx, ty, value, anchor, cls) => out.push(`<text transform="translate(${tx + 4} ${ty}) rotate(-90)" text-anchor="${anchor}" class="${cls}">${value}</text>`);
    const polyline = (points, attrs) => out.push(`<polyline points="${points.map(p => x(p[0]) + ',' + y(p[1])).join(' ')}" fill="none" ${attrs}/>`);
    const snap = value => Math.round(value) + 0.5;

    // Catmull-Rom spline through the points
    const curve = (points, attrs) => {
        const p = points.map(point => [x(point[0]), y(point[1])]);
        let d = `M${p[0]}`;
        for (let i = 0; i < p.length - 1; i++) {
            const a = p[i - 1] || p[i], b = p[i], c = p[i + 1], e = p[i + 2] || c;
            d += `C${b[0] + (c[0] - a[0]) / 6},${b[1] + (c[1] - a[1]) / 6} ${c[0] - (e[0] - b[0]) / 6},${c[1] - (e[1] - b[1]) / 6} ${c}`;
        }
        out.push(`<path d="${d}" fill="none" ${attrs}/>`);
    };

    // Standard deviation bands
    rect(x(6348.68), top, x(6664.29) - x(6348.68), bottom - top, 'fill="#92cddc"');
    rect(x(6427.58), top, x(6585.38) - x(6427.58), bottom - top, 'fill="#4f81bd"');

    // Grid and axes
    percentAxis.forEach((label, i) => {
        const pnl = 24000 - i * 2000;
        const gy = snap(y(pnl));
        line(left - 4, gy, right + 5, gy, 'class="grid"');
        text(left - 7, gy, label, 'end');
        text(right + 8, gy, pnl.toLocaleString('en-US'), 'start');
    });
    moveAxis.forEach((label, i) => {
        const gx = snap(x(6300 + i * 100));
        line(gx, top - 4, gx, bottom + 5, 'class="grid"');
        text(gx, 8, label, 'middle');
        text(gx, bottom + 13, 6300 + i * 100, 'middle');
    });
    line(left + 0.5, top, left + 0.5, bottom, 'class="grid"');
    line(right + 0.5, top, right + 0.5, bottom, 'class="grid"');
    line(left, snap(y(0)), right + 5, snap(y(0)), 'stroke="#000"');

    // Break-even lines
    [6251.57, 6934.78].forEach(price => {
        const bx = snap(x(price));
        line(bx, top + 4, bx, bottom, 'stroke="#800080" stroke-dasharray="5 5"');
        vertical(bx - 5, bottom - 2, price.toFixed(2), 'start', 'mark');
    });
    text(x(6593), bottom - 12, '43.6%', 'middle', 'mark');
    text(x(6977), bottom - 12, '23.5%', 'middle', 'mark');

    // Curves
    polyline(expiration, 'stroke="#4040c0" stroke-width="2"');
    curve(halfway, 'stroke="#ff4040"');
    curve(range, 'stroke="#f4a582" stroke-width="9" opacity="0.6"');
    curve(todayLow, 'stroke="#ff1010"');
    curve(todayMid, 'stroke="#6a94e8"');
    curve(todayHigh, 'stroke="#ff1010"');
    out.push(`<circle cx="${x(6506.48)}" cy="${y(-1008)}" r="4" fill="#f00" stroke="#000"/>`);

    vertical(x(6348.68) + 8, top + 3, '6348.68', 'end', 'on-outer');
    vertical(x(6427.58) + 8, top + 3, '6427.58', 'end', 'on-inner');
    vertical(x(6585.38) - 6, top + 3, '6585.38', 'end', 'on-inner');
    vertical(x(6664.29) - 6, top + 3, '6664.29', 'end', 'on-outer');

    // Current P&L tags
    const tagY = Math.round(y(-1008)) - 7;
    rect(6, tagY, left - 11, 14, 'fill="#c00"');
    text(left - 7, tagY + 7, '-6%', 'end', 'tag');
    rect(right + 5, tagY, 47, 14, 'fill="#c00"');
    text(right + 8, tagY + 7, '-1,008', 'start', 'tag');

    // Greeks
    rect(4.5, height - 188.5, width - 9, 184, 'rx="4" fill="#e8f0f8" stroke="#44546a"');
    greeks.forEach(row => {
        const base = height - row.base - 0.5;
        const max = Math.max(...row.values.map(Math.abs));
        row.values.forEach((value, i) => {
            const x1 = i === 0 ? left + 0.5 : snap(x(6250 + i * 100));
            const x2 = i === 7 ? right + 1.5 : snap(x(6350 + i * 100));
            const h = Math.round(Math.abs(value) / max * 10);
            const tx = x(6300 + i * 100) + 1;
            if (value < 0) {
                text(tx, base - 4, value, 'middle', 'neg');
                rect(x1, base, x2 - x1, h, 'fill="#f77b7d" stroke="#555"');
            } else {
                text(tx, base + 7, value, 'middle', 'pos');
                rect(x1, base - h, x2 - x1, h, 'fill="#5b7fff" stroke="#555"');
            }
            if (row.name === 'PnL') text(tx, base - 15, pnlPercents[i], 'middle', 'neg');
        });
        text(31, base + 1, row.name, 'middle', 'greek');
        text(width - 27, base + 1, row.name, 'middle', 'greek');
    });

    // Column for the current price
    const nowX = x(6506.48);
    rect(snap(nowX) - 25, height - 204.5, 49, 200, 'rx="4" fill="#e8f0f8" fill-opacity="0.85" stroke="#44546a"');
    text(nowX, bottom + 13, '6506.48', 'middle');
    greeks.forEach(row => {
        const offset = row.name === 'PnL' ? -4 : 2;
        text(nowX, height - row.base + offset, row.now, 'middle', row.now[0] === '-' ? 'now-neg' : 'now-pos');
    });
    text(nowX, height - 149, '-5.8%', 'middle', 'now-neg');
    rect(snap(nowX) - 15, 0.5, 29, 13, 'fill="#e8f0f8" stroke="#44546a"');
    text(nowX, 8, '0.0%', 'middle');

    svg.innerHTML = out.join('');
}

drawChart();
window.addEventListener('resize', drawChart);
```
